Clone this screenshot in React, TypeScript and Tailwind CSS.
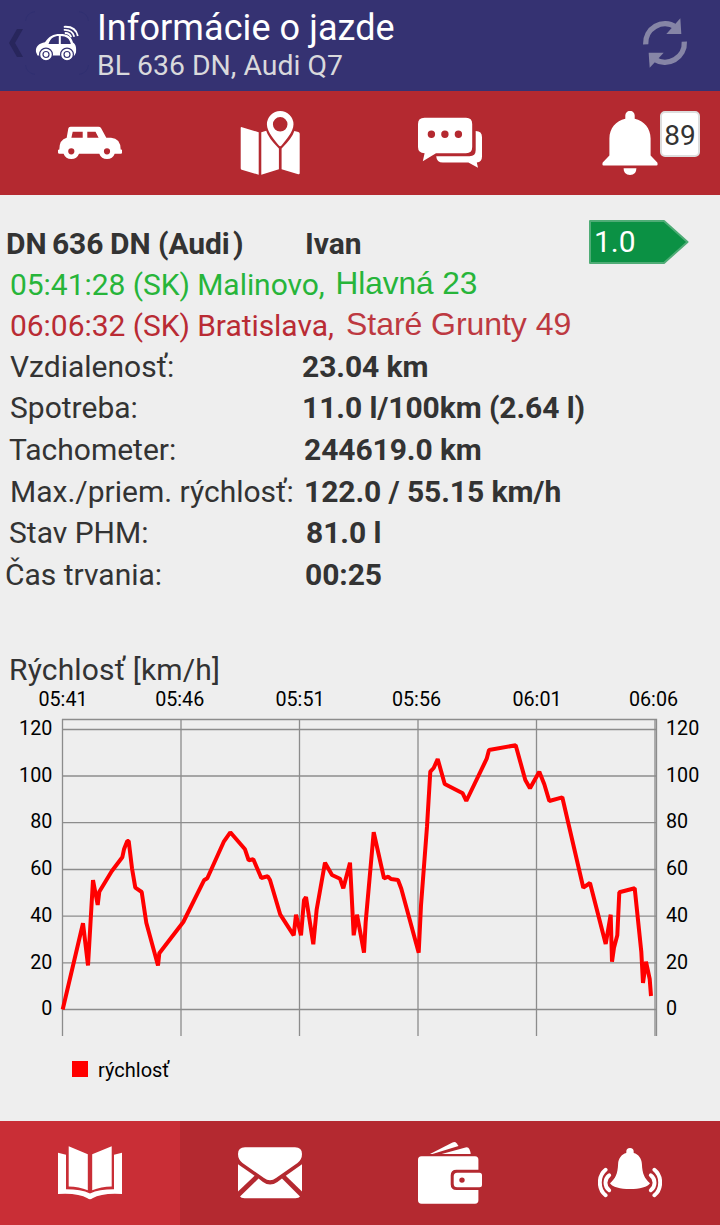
import React from 'react';
import clsx from 'clsx';

type Point = [number, number];

interface DetailRow {
  label: string;
  value: string;
  rowClass: string;
  labelClass: string;
}

const details: DetailRow[] = [
  { label: 'Vzdialenosť:', value: '23.04 km', rowClass: 'h-[41px] pl-[10px]', labelClass: 'w-[292px]' },
  { label: 'Spotreba:', value: '11.0 l/100km (2.64 l)', rowClass: 'h-[42px] pl-[10px]', labelClass: 'w-[292px]' },
  { label: 'Tachometer:', value: '244619.0 km', rowClass: 'h-[42px] pl-[9px]', labelClass: 'w-[295px]' },
  { label: 'Max./priem. rýchlosť:', value: '122.0 / 55.15 km/h', rowClass: 'h-[41px] pl-[10px]', labelClass: 'w-[294px]' },
  { label: 'Stav PHM:', value: '81.0 l', rowClass: 'h-[42px] pl-[9px]', labelClass: 'w-[297px]' },
  { label: 'Čas trvania:', value: '00:25', rowClass: 'h-[41px] pl-[5px]', labelClass: 'w-[300px]' },
];

const timeTicks = [
  { label: '05:41', x: 62.5, textX: 63 },
  { label: '05:46', x: 181, textX: 179.7 },
  { label: '05:51', x: 299.5, textX: 300 },
  { label: '05:56', x: 418, textX: 416.5 },
  { label: '06:01', x: 536.5, textX: 537 },
  { label: '06:06', x: 655, textX: 653.5 },
];

const speedTicks = [
  { label: '120', y: 729.5 },
  { label: '100', y: 776 },
  { label: '80', y: 822.7 },
  { label: '60', y: 869.5 },
  { label: '40', y: 916.2 },
  { label: '20', y: 962.9 },
  { label: '0', y: 1009.5 },
];

const speedLine: Point[] = [
  [62.7, 1009.5], [83, 923.3], [88, 965.5], [93, 880], [97.7, 905], [99.3, 891.7],
  [111.7, 871.3], [122.3, 857.3], [124, 849.3], [127.3, 841], [128.7, 841], [132, 868.3],
  [135.3, 887.7], [141.7, 892], [146.3, 922.7], [158, 965.5], [159.3, 953.3], [183.3, 922],
  [204, 880.3], [207.3, 878.3], [224, 841.3], [230.3, 832.3], [245, 849.3], [248.7, 860.3],
  [253.3, 859.3], [261.3, 878], [267.7, 876.3], [270, 880], [280.3, 914.7], [293.7, 935.3],
  [296, 914.7], [301, 935.3], [304, 900], [306, 897], [313.3, 944.3], [316.7, 909.3],
  [325, 862.7], [332, 875], [340, 878.7], [343.3, 888.3], [350, 862.7], [353.7, 935.3],
  [357, 914.7], [364, 952.7], [365.7, 921.7], [373.7, 832.3], [384, 878.3], [388.3, 876.7],
  [391, 879], [398, 880], [401.3, 888.7], [418.7, 952.7], [421, 905.3], [427, 826.7],
  [430.3, 771.7], [433.7, 768], [437.7, 759], [444.7, 784], [462.7, 793.3], [466.3, 801],
  [486.7, 758.7], [489, 750], [515.7, 745.3], [525.3, 780], [530, 788.3], [539.3, 771.7],
  [544.3, 784.3], [549.3, 801], [562.3, 797.3], [583.3, 887.7], [590, 883], [605.7, 944],
  [610.7, 914.7], [612, 961.7], [614, 947.7], [617.3, 935.3], [619.3, 892.3], [634.7, 888.3],
  [641.3, 951.7], [643, 983], [646, 961.7], [649.7, 979], [651, 996],
];

const Icon: React.FC<{ children: React.ReactNode }> = ({ children }) => (
  <svg viewBox="0 0 64 64" className="h-16 w-16" fill="#fff">
    {children}
  </svg>
);

const CarIcon = () => (
  <Icon>
    <path
      fillRule="evenodd"
      d="M12.5 15.7H40.5Q42.2 15.7 43 17L48.3 26.7H53Q62.5 27.2 62.7 38.5H63.3Q64 38.5 64 39.3V41.7Q64 42.7 63 42.7H56.7A8.2 8.2 0 0 1 41.3 42.7H21A8.2 8.2 0 0 1 5.6 42.7H1.5Q0 42.7 0 41.5V39.3Q0 38.5 1.3 38.5Q1.3 28.5 8.7 26.7L10.3 17.5Q10.6 15.7 12.5 15.7ZM14.7 20.7L13.4 26.7H24.7V20.7ZM29.3 20.7V26.7H40.6L37.5 20.7ZM13.3 37.2A3.1 3.1 0 1 0 13.3 43.4A3.1 3.1 0 1 0 13.3 37.2ZM49 37.2A3.1 3.1 0 1 0 49 43.4A3.1 3.1 0 1 0 49 37.2Z"
    />
  </Icon>
);

const MapIcon = () => (
  <Icon>
    <path d="M2.7 17Q2.7 15.7 4 16.2L20.7 21.2V63.7L3.7 58.7Q2.7 58.4 2.7 57.3Z" />
    <path d="M23.3 21.2L28.2 19.7Q30 26.5 40.9 37.5V58.3L23.3 63.7Z" />
    <path d="M43.6 37.5Q54.5 26.5 56.3 19.9L60.4 21.1Q61.7 21.5 61.7 22.8V62Q61.7 63.6 60.2 63.2L43.6 58.3Z" />
    <path
      fillRule="evenodd"
      d="M42.2 0A13.3 13.3 0 0 1 55.5 13.3C55.5 21 47 30 43.7 34.3Q42.2 36 40.7 34.3C37.4 30 28.9 21 28.9 13.3A13.3 13.3 0 0 1 42.2 0ZM42.2 6A7.3 7.3 0 1 0 42.2 20.6A7.3 7.3 0 1 0 42.2 6Z"
    />
  </Icon>
);

const ChatIcon = () => (
  <Icon>
    <path
      fillRule="evenodd"
      d="M6.5 6.7H48Q54.2 6.7 54.2 13V36Q54.2 42.2 48 42.2H18L4.8 50.3L6.6 42.2Q0 42 0 36V13Q0 6.7 6.5 6.7ZM13.4 19.6A3.7 3.7 0 1 0 13.4 27A3.7 3.7 0 1 0 13.4 19.6ZM26.9 19.6A3.7 3.7 0 1 0 26.9 27A3.7 3.7 0 1 0 26.9 19.6ZM40.4 19.6A3.7 3.7 0 1 0 40.4 27A3.7 3.7 0 1 0 40.4 19.6Z"
    />
    <path d="M57.7 20Q64 20 64 26.3V45.5Q64 51 58.8 51.6L60 56.8L50.4 51.5H24.8Q18.7 51.5 18.2 45.2H51.5Q57.7 45.2 57.7 39Z" />
  </Icon>
);

const BellIcon = () => (
  <Icon>
    <path d="M27.3 7.8V4.5A4.7 4.7 0 0 1 36.7 4.5V7.8C46 9.8 52.6 17.5 52.6 27.5V44.5L59.3 51.4Q60.2 54.6 58.5 54.6H5.5Q3.8 54.6 4.7 51.4L11.4 44.5V27.5C11.4 17.5 18 9.8 27.3 7.8Z" />
    <path d="M25.6 57.3H38.4Q38.4 64 32 64T25.6 57.3Z" />
  </Icon>
);

const BookIcon = () => (
  <Icon>
    <path d="M10.7 5.3L29.8 13.3V49.3Q21 45.7 10.7 45.5Z" />
    <path d="M53.7 5.3L34.2 13.3V49.3Q43 45.7 53.7 45.5Z" />
    <path d="M0 11.7L8 13.7V48.3Q23 48.3 32 52.5Q41 48.3 56 48.3V13.7L64 11.7V53Q44 51.7 34.5 57.3Q32 59.3 29.5 57.3Q20 51.7 0 53Z" />
  </Icon>
);

const MailIcon = () => (
  <Icon>
    <path d="M7 6.3H57Q64 6.3 64 13Q64 18.5 59.5 22L38 37Q32 41.5 26 37L4.5 22Q0 18.5 0 13Q0 6.3 7 6.3Z" />
    <path d="M0 23.3L16.6 34.7L0 50.5Z" />
    <path d="M64 23.3L47.8 34.7L64 50.5Z" />
    <path d="M20.5 37.5L25 40.9Q32 46 39.4 40.9L44 37.5L62 55.5Q61 57.3 57.5 57.3H6.5Q3 57.3 2 55.5Z" />
  </Icon>
);

const WalletIcon = () => (
  <Icon>
    <path d="M3.5 15.3H57Q60.4 15.3 60.4 18.8V28.7H38.5Q32.7 28.7 32.7 34.5V43.2Q32.7 49 38.5 49H60.4V59.3Q60.4 62.7 57 62.7H3.5Q0 62.7 0 59.3V18.8Q0 15.3 3.5 15.3Z" />
    <path
      fillRule="evenodd"
      d="M39.2 31.7H61.5Q64 31.7 64 34.2V43.7Q64 46.2 61.5 46.2H39.2Q35.7 46.2 35.7 42.7V35.2Q35.7 31.7 39.2 31.7ZM44 36.4A2.7 2.7 0 1 0 44 41.8A2.7 2.7 0 1 0 44 36.4Z"
    />
    <path d="M12 13L34.5 1.5Q37 .3 38.6 2.2L40.5 5L14.5 13Z" />
    <path d="M23.7 13L47.5 6.5Q50.3 5.7 51.3 8Q52.7 11 52.7 13Z" />
  </Icon>
);

const AlarmIcon = () => (
  <Icon>
    <path d="M28.3 12V10.8A3.7 3.7 0 0 1 35.7 10.8V12C40.5 13.3 43.7 17.5 43.9 23C44.3 33 46.5 37.5 52 42.2C50 46 41.5 48 32 48S14 46 12 42.2C17.5 37.5 19.7 33 20.1 23C20.3 17.5 23.5 13.3 28.3 12Z" />
    <g fill="none" stroke="#fff" strokeWidth="3.9" strokeLinecap="round">
      <path d="M7.6 28.8C-.1 35 -.1 48 7.6 54.3" />
      <path d="M11.2 34.2C6.2 38 6.2 45.5 11.2 49.3" />
      <path d="M56.4 28.8C64.1 35 64.1 48 56.4 54.3" />
      <path d="M52.8 34.2C57.8 38 57.8 45.5 52.8 49.3" />
    </g>
  </Icon>
);

const LogoIcon = () => (
  <svg viewBox="0 0 64 64" className="h-16 w-16" fill="none">
    <path
      stroke="#2e2f70"
      strokeWidth="0.8"
      d="M.5 10Q1.5 2 10 .5M54 .5Q62.5 2 63.5 10M63.5 54Q62.5 62 54 63.5M10 63.5Q1.5 62 .5 54"
    />
    <g transform="translate(10 14)">
      <path
        fill="#fff"
        fillRule="evenodd"
        d="M1 27C.3 21 4 18.5 10 17.2C14 11.5 18 9 25 9C32.5 9 36.5 11.5 38 17.5C41 19.5 41.5 23 41 27.5L39.5 30.5H2.5ZM13.5 19H23.8V11C19 11 15.5 13 13.5 19ZM25.8 11V19H35.8C34.6 13.5 31.5 11.2 25.8 11Z"
      />
      <g fill="#fff" stroke="#353272" strokeWidth="1.2">
        <circle cx="11" cy="29.5" r="6.4" />
        <circle cx="32" cy="29.5" r="6.4" />
        <circle cx="11" cy="29.5" r="3" />
        <circle cx="32" cy="29.5" r="3" />
      </g>
      <g stroke="#fff" strokeWidth="1.8">
        <path d="M28.8 1.8C36.5 1.3 41.5 4.5 42.8 11" />
        <path d="M28.8 4.9C34.5 4.5 38 7 39.3 11.7" />
        <path d="M29.8 8C33 7.8 35 9 36.2 12.3" />
      </g>
    </g>
  </svg>
);

const RefreshIcon = () => (
  <svg viewBox="185 50 138 156" className="h-[52px] w-[46px]" fill="none" stroke="#8685a6" strokeWidth="16">
    <path d="M196 132A58 58 0 0 1 286 80" />
    <path d="M312 124A58 58 0 0 1 222 176" />
    <g fill="#8685a6" stroke="none">
      <path d="M300 54L303 101H258Z" />
      <path d="M208 202L205 157H250Z" />
    </g>
  </svg>
);

const TabButton: React.FC<{ active?: boolean; children: React.ReactNode }> = ({ active, children }) => (
  <button className={clsx('relative flex items-center justify-center', active ? 'bg-[#c92e36]' : 'bg-[#b42930]')}>
    {children}
  </button>
);

const Header = () => (
  <header className="flex h-[91px] items-start bg-[#353272]">
    <svg viewBox="0 0 14 28" className="mt-[29px] ml-[8.5px] h-7 w-[14px]" fill="#28265c">
      <path d="M8 0H14L6 14L14 28H8L0 14Z" />
    </svg>
    <div className="mt-[11px] ml-[2.5px]">
      <LogoIcon />
    </div>
    <div className="ml-[8px] flex-1 whitespace-nowrap">
      <h1 className="mt-[7px] text-[36px] leading-[42px] tracking-[0.08px] text-white">Informácie o jazde</h1>
      <p className="text-[28.4px] leading-[34px] text-[#d9d9dc]">BL 636 DN, Audi Q7</p>
    </div>
    <button className="mt-[17px] mr-[32px]">
      <RefreshIcon />
    </button>
  </header>
);

const SpeedChart = () => (
  <svg viewBox="0 686 720 354" className="block h-[354px] w-[720px]" fontSize="19.7" fill="#000">
    <g stroke="#8c8c8c" strokeWidth="1.3">
      <path d="M62 719.5H656.5V1036" fill="none" />
      {timeTicks.map((tick) => (
        <line key={tick.label} x1={tick.x} x2={tick.x} y1="719" y2="1036" />
      ))}
      {speedTicks.map((tick) => (
        <line key={tick.label} x1="62" x2="656" y1={tick.y} y2={tick.y} />
      ))}
    </g>
    {timeTicks.map((tick) => (
      <text key={tick.label} x={tick.textX} y="706" textAnchor="middle">{tick.label}</text>
    ))}
    {speedTicks.map((tick) => (
      <React.Fragment key={tick.label}>
        <text x="52.3" y={tick.y + 5.7} textAnchor="end">{tick.label}</text>
        <text x="666" y={tick.y + 5.7}>{tick.label}</text>
      </React.Fragment>
    ))}
    <polyline points={speedLine.map((p) => p.join(',')).join(' ')} fill="none" stroke="#f00" strokeWidth="4" strokeLinejoin="bevel" />
  </svg>
);

export default function App() {
  return (
    <div className="flex h-[1225px] w-[720px] flex-col overflow-hidden bg-[#eee] font-['Roboto',sans-serif] text-[#333]">
      <Header />
      <nav className="grid h-[104px] grid-cols-4">
        <TabButton><CarIcon /></TabButton>
        <TabButton><MapIcon /></TabButton>
        <TabButton><ChatIcon /></TabButton>
        <TabButton>
          <BellIcon />
          <span className="absolute top-5 right-5 flex h-[46px] w-10 items-center justify-center rounded-[5px] border-2 border-[#ddd] bg-white pt-[3px] text-[28px]">
            89
          </span>
        </TabButton>
      </nav>

      <main className="flex-1 pt-[28px] text-[30px] leading-[41px] whitespace-nowrap">
        <div className="flex h-[41px] pl-[6px] font-bold">
          <span className="flex w-[299px] tracking-[-0.1px]">
            <span className="w-[46px]">DN</span>
            <span className="w-[58px]">636</span>
            <span className="w-[48px]">DN</span>
            <span className="w-[75px]">(Audi</span>
            <span>)</span>
          </span>
          <span className="w-[284px]">Ivan</span>
          <div className="-mt-[3px] grid h-[44px] w-[100px]">
            <svg viewBox="0 0 100 44" className="col-start-1 row-start-1 h-11 w-[100px]">
              <path d="M1 1H75L98.5 22L75 43H1Z" fill="#0b9144" stroke="#4fac76" strokeWidth="2" strokeLinejoin="round" />
            </svg>
            <span className="z-10 col-start-1 row-start-1 pt-px pl-[5px] font-normal text-white">1.0</span>
          </div>
        </div>
        <div className="flex h-[41px] pl-[10px] tracking-[-0.05px] text-[#27b53a]">
          <span className="w-[325.5px]">05:41:28 (SK) Malinovo,</span>
          <span className="-mt-px font-['Liberation_Sans',sans-serif] text-[31.6px]">Hlavná 23</span>
        </div>
        <div className="flex h-[41px] pl-[10px] tracking-[-0.05px] text-[#b92b34]">
          <span className="w-[336px]">06:06:32 (SK) Bratislava,</span>
          <span className="-mt-px font-['Liberation_Sans',sans-serif] text-[32px] text-[#bd3941]">Staré Grunty 49</span>
        </div>
        {details.map((row) => (
          <div key={row.label} className={clsx('flex', row.rowClass)}>
            <span className={row.labelClass}>{row.label}</span>
            <span className="font-bold tracking-[-0.08px]">{row.value}</span>
          </div>
        ))}

        <h2 className="mt-[54px] h-[37px] pl-[9px] leading-[42px] tracking-[0.15px]">Rýchlosť [km/h]</h2>
        <SpeedChart />
        <div className="mt-[17px] flex items-start pl-[72px] text-[20px] leading-[24px] text-black">
          <span className="mt-1 h-4 w-4 bg-[#f00]" />
          <span className="ml-[10px] pt-px">rýchlosť</span>
        </div>
      </main>

      <nav className="grid h-[104px] grid-cols-4">
        <TabButton active><BookIcon /></TabButton>
        <TabButton><MailIcon /></TabButton>
        <TabButton><WalletIcon /></TabButton>
        <TabButton><AlarmIcon /></TabButton>
      </nav>
    </div>
  );
}
